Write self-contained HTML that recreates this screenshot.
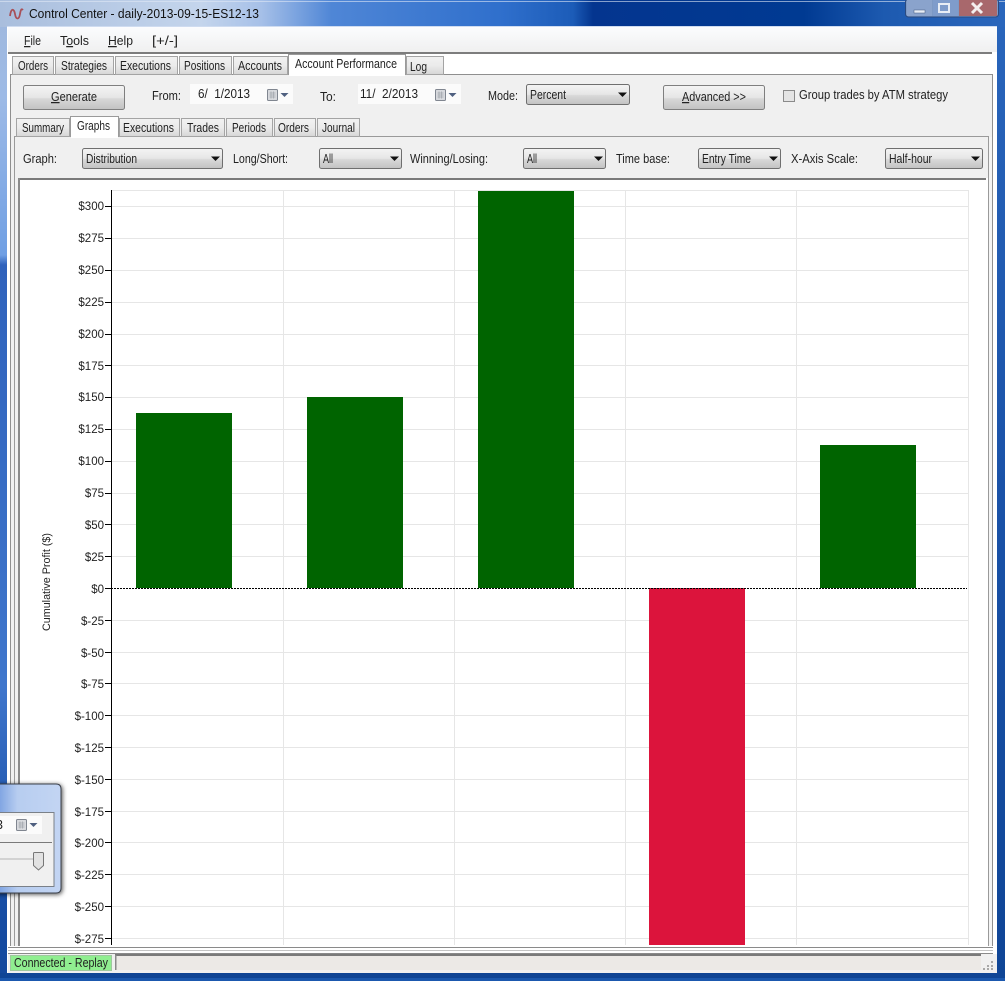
<!DOCTYPE html>
<html><head><meta charset="utf-8"><title>Control Center</title>
<style>
html,body{margin:0;padding:0;background:#fff;width:1005px;height:981px;overflow:hidden}
svg{display:block;position:absolute;left:0;top:0}
text{font-family:"Liberation Sans",sans-serif;font-size:12.5px;fill:#222}
.l{font-size:11.5px;fill:#222;text-anchor:end}
</style></head><body>
<svg width="1005" height="981" viewBox="0 0 1005 981" xmlns="http://www.w3.org/2000/svg">
<defs>
<linearGradient id="tb" x1="0" x2="1" y1="0" y2="0">
<stop offset="0" stop-color="#a9bedd"/><stop offset=".2" stop-color="#c4d5ec"/><stop offset=".26" stop-color="#a6c0e8"/><stop offset=".33" stop-color="#4f86d6"/><stop offset=".5" stop-color="#2f6fcc"/><stop offset=".57" stop-color="#1c5cb8"/><stop offset=".59" stop-color="#04358f"/><stop offset=".8" stop-color="#003a92"/><stop offset=".88" stop-color="#1d5ab0"/><stop offset="1" stop-color="#2a66bc"/>
</linearGradient>
<linearGradient id="lf" x1="0" x2="0" y1="0" y2="1">
<stop offset="0" stop-color="#a0b8dc"/><stop offset=".1" stop-color="#9dbae6"/><stop offset=".26" stop-color="#6f9fe4"/><stop offset=".27" stop-color="#2f62bc"/><stop offset=".7" stop-color="#3f76cc"/><stop offset=".85" stop-color="#1d54ac"/><stop offset="1" stop-color="#12479c"/>
</linearGradient>
<linearGradient id="rf" x1="0" x2="0" y1="0" y2="1">
<stop offset="0" stop-color="#2a66bc"/><stop offset=".5" stop-color="#1a52a8"/><stop offset="1" stop-color="#0f4596"/>
</linearGradient>
<linearGradient id="btn" x1="0" x2="0" y1="0" y2="1"><stop offset="0" stop-color="#f4f4f4"/><stop offset=".5" stop-color="#e6e6e6"/><stop offset=".55" stop-color="#d8d8d8"/><stop offset="1" stop-color="#c2c2c2"/></linearGradient>
<linearGradient id="tab" x1="0" x2="0" y1="0" y2="1"><stop offset="0" stop-color="#f2f2f2"/><stop offset=".5" stop-color="#ebebeb"/><stop offset="1" stop-color="#d6d6d6"/></linearGradient>
<linearGradient id="menu" x1="0" x2="0" y1="0" y2="1"><stop offset="0" stop-color="#fbfcfe"/><stop offset="1" stop-color="#f0f0f0"/></linearGradient>
<linearGradient id="pop" x1="0" x2="1" y1="0" y2="0"><stop offset="0" stop-color="#6f98de"/><stop offset=".35" stop-color="#b7cdf0"/><stop offset="1" stop-color="#c3d5f3"/></linearGradient>
<filter id="sh" x="-30%" y="-30%" width="160%" height="160%"><feDropShadow dx="1" dy="1" stdDeviation="2.500" flood-color="#000" flood-opacity=".7"/></filter>
<g id="cal"><rect x="0" y="0" width="10" height="11" rx="1" fill="#d8dade" stroke="#808690"/><path d="M2 3.500h6M2 5.500h6M2 7.500h6M3.500 2v7M6 2v7" stroke="#a4a8ae" stroke-width=".8"/><path d="M13 3.500h8l-4 4z" fill="#4f6080"/></g>
</defs>

<!-- window frame -->
<rect width="1005" height="981" fill="#1a52a8"/>
<rect x="0" y="0" width="8" height="981" fill="url(#lf)"/>
<rect x="997" y="0" width="8" height="981" fill="url(#rf)"/>
<rect x="0" y="0" width="1005" height="27" fill="url(#tb)"/>
<rect x="0" y="1" width="1005" height="1" fill="#dfe8f5" opacity=".6"/>
<rect x="0" y="973" width="1005" height="8" fill="#0f4596"/>
<rect x="0" y="978" width="1005" height="3" fill="#1b58ae"/>
<rect x="7" y="27" width="990" height="946" fill="#fff"/>
<rect x="7" y="26" width="990" height="1" fill="#cfdcf0"/>

<!-- title -->
<path d="M10 16c1-8 4-8 5-2s4 6 5 0 2-5 3-4" fill="none" stroke="#a85058" stroke-width="1.800"/>
<text x="29" y="18" textLength="230" lengthAdjust="spacingAndGlyphs" style="fill:#111">Control Center - daily-2013-09-15-ES12-13</text>

<!-- window buttons -->
<rect x="905.500" y="-1" width="93" height="18" rx="3" fill="#7d99c4" stroke="#2a4a80"/>
<rect x="907" y="0" width="25" height="16" fill="#8aa3cc"/>
<rect x="933" y="0" width="25" height="16" fill="#7f9ccb"/>
<rect x="959" y="0" width="38" height="16" fill="#a8686c"/>
<rect x="914" y="10" width="11" height="3" fill="#e8edf5" stroke="#40587e" stroke-width=".5"/>
<rect x="939" y="4" width="10" height="8" fill="none" stroke="#e8edf5" stroke-width="2"/>
<path d="M972 3l10 10M982 3l-10 10" stroke="#f4eeee" stroke-width="3"/>

<!-- menu -->
<rect x="8" y="27" width="989" height="25" fill="url(#menu)"/>
<rect x="8" y="52" width="984" height="2" fill="#7d7d7d"/>
<text x="24" y="45" textLength="17" lengthAdjust="spacingAndGlyphs"><tspan text-decoration="underline">F</tspan>ile</text>
<text x="60" y="45" textLength="29" lengthAdjust="spacingAndGlyphs">T<tspan text-decoration="underline">o</tspan>ols</text>
<text x="108" y="45" textLength="25" lengthAdjust="spacingAndGlyphs"><tspan text-decoration="underline">H</tspan>elp</text>
<text x="152" y="45" textLength="26" lengthAdjust="spacingAndGlyphs">[+/-]</text>

<!-- main panel -->
<rect x="8" y="54" width="989" height="893" fill="#fff"/>
<rect x="10.500" y="74.500" width="982" height="880" fill="#f0f0f0" stroke="#8f8f8f"/>
<!-- main tabs -->
<g fill="url(#tab)" stroke="#a4a4a4">
<rect x="12.500" y="56.500" width="41" height="18"/>
<rect x="55.500" y="56.500" width="58" height="18"/>
<rect x="115.500" y="56.500" width="62" height="18"/>
<rect x="179.500" y="56.500" width="52" height="18"/>
<rect x="233.500" y="56.500" width="54" height="18"/>
<rect x="406.500" y="56.500" width="37" height="18"/>
</g>
<path d="M288.500 75V54.500h117V75" fill="#fff" stroke="#9a9a9a"/>
<rect x="289" y="74" width="116" height="2" fill="#fff"/>
<text x="18" y="70" textLength="30" lengthAdjust="spacingAndGlyphs">Orders</text>
<text x="61" y="70" textLength="46" lengthAdjust="spacingAndGlyphs">Strategies</text>
<text x="120" y="70" textLength="51" lengthAdjust="spacingAndGlyphs">Executions</text>
<text x="184" y="70" textLength="41" lengthAdjust="spacingAndGlyphs">Positions</text>
<text x="238" y="70" textLength="44" lengthAdjust="spacingAndGlyphs">Accounts</text>
<text x="295" y="68" textLength="102" lengthAdjust="spacingAndGlyphs">Account Performance</text>
<text x="410" y="71" textLength="17" lengthAdjust="spacingAndGlyphs">Log</text>

<!-- toolbar -->
<rect x="23.500" y="85.500" width="101" height="24" rx="2" fill="url(#btn)" stroke="#7f7f7f"/>
<text x="51" y="101" textLength="46" lengthAdjust="spacingAndGlyphs"><tspan text-decoration="underline">G</tspan>enerate</text>
<text x="152" y="100" textLength="29" lengthAdjust="spacingAndGlyphs">From:</text>
<rect x="190" y="84" width="103" height="20" fill="#fbfbfb"/>
<text x="198" y="98" textLength="52" lengthAdjust="spacingAndGlyphs" xml:space="preserve">6/  1/2013</text>
<use href="#cal" x="267.500" y="89.500"/>
<text x="320" y="101" textLength="16" lengthAdjust="spacingAndGlyphs">To:</text>
<rect x="358" y="84" width="103" height="20" fill="#fbfbfb"/>
<text x="360" y="98" textLength="58" lengthAdjust="spacingAndGlyphs" xml:space="preserve">11/  2/2013</text>
<use href="#cal" x="435.500" y="89.500"/>
<text x="488" y="100" textLength="30" lengthAdjust="spacingAndGlyphs">Mode:</text>
<rect x="526.500" y="84.500" width="103" height="20" rx="2" fill="url(#btn)" stroke="#6f6f6f"/><path d="M618 92.500h9l-4.500 4.500z" fill="#111"/>
<text x="530" y="99" textLength="36" lengthAdjust="spacingAndGlyphs">Percent</text>
<rect x="663.500" y="85.500" width="101" height="24" rx="2" fill="url(#btn)" stroke="#7f7f7f"/>
<text x="682" y="101" textLength="64" lengthAdjust="spacingAndGlyphs"><tspan text-decoration="underline">A</tspan>dvanced &gt;&gt;</text>
<rect x="783.500" y="90.500" width="11" height="11" fill="#e4e4e4" stroke="#8a8a8a"/>
<text x="799" y="99" textLength="149" lengthAdjust="spacingAndGlyphs">Group trades by ATM strategy</text>

<!-- sub panel -->
<rect x="14.500" y="136.500" width="974" height="812" fill="#f0f0f0" stroke="#9a9a9a"/>
<g fill="url(#tab)" stroke="#a4a4a4">
<rect x="16.500" y="118.500" width="53" height="18"/>
<rect x="119.500" y="118.500" width="60" height="18"/>
<rect x="181.500" y="118.500" width="43" height="18"/>
<rect x="226.500" y="118.500" width="46" height="18"/>
<rect x="274.500" y="118.500" width="41" height="18"/>
<rect x="317.500" y="118.500" width="42" height="18"/>
</g>
<path d="M70.500 137V116.500h48V137" fill="#fff" stroke="#9a9a9a"/>
<rect x="71" y="136" width="47" height="2" fill="#fff"/>
<text x="22" y="132" textLength="42" lengthAdjust="spacingAndGlyphs">Summary</text>
<text x="77" y="130" textLength="33" lengthAdjust="spacingAndGlyphs">Graphs</text>
<text x="123" y="132" textLength="51" lengthAdjust="spacingAndGlyphs">Executions</text>
<text x="187" y="132" textLength="32" lengthAdjust="spacingAndGlyphs">Trades</text>
<text x="232" y="132" textLength="34" lengthAdjust="spacingAndGlyphs">Periods</text>
<text x="278" y="132" textLength="31" lengthAdjust="spacingAndGlyphs">Orders</text>
<text x="322" y="132" textLength="33" lengthAdjust="spacingAndGlyphs">Journal</text>

<!-- graph row -->
<text x="23" y="163" textLength="34" lengthAdjust="spacingAndGlyphs">Graph:</text>
<rect x="82.500" y="148.500" width="140" height="20" rx="2" fill="url(#btn)" stroke="#6f6f6f"/><path d="M211 156.500h9l-4.500 4.500z" fill="#111"/>
<text x="86" y="163" textLength="51" lengthAdjust="spacingAndGlyphs">Distribution</text>
<text x="233" y="163" textLength="55" lengthAdjust="spacingAndGlyphs">Long/Short:</text>
<rect x="319.500" y="148.500" width="82" height="20" rx="2" fill="url(#btn)" stroke="#6f6f6f"/><path d="M390 156.500h9l-4.500 4.500z" fill="#111"/>
<text x="323" y="163" textLength="10" lengthAdjust="spacingAndGlyphs">All</text>
<text x="410" y="163" textLength="78" lengthAdjust="spacingAndGlyphs">Winning/Losing:</text>
<rect x="523.500" y="148.500" width="82" height="20" rx="2" fill="url(#btn)" stroke="#6f6f6f"/><path d="M594 156.500h9l-4.500 4.500z" fill="#111"/>
<text x="527" y="163" textLength="10" lengthAdjust="spacingAndGlyphs">All</text>
<text x="616" y="163" textLength="54" lengthAdjust="spacingAndGlyphs">Time base:</text>
<rect x="698.500" y="148.500" width="82" height="20" rx="2" fill="url(#btn)" stroke="#6f6f6f"/><path d="M769 156.500h9l-4.500 4.500z" fill="#111"/>
<text x="702" y="163" textLength="49" lengthAdjust="spacingAndGlyphs">Entry Time</text>
<text x="791" y="163" textLength="67" lengthAdjust="spacingAndGlyphs">X-Axis Scale:</text>
<rect x="885.500" y="148.500" width="97" height="20" rx="2" fill="url(#btn)" stroke="#6f6f6f"/><path d="M971 156.500h9l-4.500 4.500z" fill="#111"/>
<text x="889" y="163" textLength="43" lengthAdjust="spacingAndGlyphs">Half-hour</text>

<!-- chart area -->
<rect x="18" y="178" width="971" height="768" fill="#fff"/>
<rect x="18" y="178" width="968" height="2" fill="#7a7a7a"/>
<rect x="18" y="178" width="2" height="768" fill="#8a8a8a"/>
<rect x="8" y="946" width="986" height="7" fill="#fff"/>
<rect x="8" y="947" width="986" height="1" fill="#8a8a8a"/>
<rect x="8" y="950" width="986" height="1" fill="#c4c4c4"/>
<rect x="10" y="75" width="1" height="871" fill="#8f8f8f"/>
<rect x="14" y="137" width="1" height="809" fill="#9a9a9a"/>
<rect x="988" y="136" width="1" height="810" fill="#9a9a9a"/>
<rect x="992" y="75" width="1" height="871" fill="#8f8f8f"/>
<rect x="989" y="137" width="3" height="809" fill="#f4f4f4"/>
<rect x="993" y="54" width="4" height="899" fill="#fff"/>

<!-- grid -->
<g stroke="#e6e6e6" stroke-width="1" shape-rendering="crispEdges">
<path d="M111 190.500H969M111 206.500H969M111 238.500H969M111 270.500H969M111 302.500H969M111 334.500H969M111 365.500H969M111 397.500H969M111 429.500H969M111 461.500H969M111 493.500H969M111 524.500H969M111 556.500H969M111 620.500H969M111 652.500H969M111 683.500H969M111 715.500H969M111 747.500H969M111 779.500H969M111 811.500H969M111 842.500H969M111 874.500H969M111 906.500H969M111 938.500H969"/>
<path d="M283.500 190V945M454.500 190V945M625.500 190V945M796.500 190V945M968.500 190V945"/>
</g>
<!-- bars -->
<rect x="136" y="413" width="96" height="175" fill="#006400"/>
<rect x="307" y="397" width="96" height="191" fill="#006400"/>
<rect x="478" y="191" width="96" height="397" fill="#006400"/>
<rect x="649" y="588" width="96" height="357" fill="#dc143c"/>
<rect x="820" y="445" width="96" height="143" fill="#006400"/>
<path d="M111 588.500H967" stroke="#000" stroke-dasharray="2 1" shape-rendering="crispEdges"/>
<!-- axis -->
<path d="M111.500 190V945" stroke="#000" shape-rendering="crispEdges"/>
<path d="M105 206.500h6M105 238.500h6M105 270.500h6M105 302.500h6M105 334.500h6M105 365.500h6M105 397.500h6M105 429.500h6M105 461.500h6M105 493.500h6M105 524.500h6M105 556.500h6M105 588.500h6M105 620.500h6M105 652.500h6M105 683.500h6M105 715.500h6M105 747.500h6M105 779.500h6M105 811.500h6M105 842.500h6M105 874.500h6M105 906.500h6M105 938.500h6" stroke="#000" shape-rendering="crispEdges"/>
<g>
<text class="l" x="104" y="210">$300</text>
<text class="l" x="104" y="242">$275</text>
<text class="l" x="104" y="274">$250</text>
<text class="l" x="104" y="306">$225</text>
<text class="l" x="104" y="338">$200</text>
<text class="l" x="104" y="370">$175</text>
<text class="l" x="104" y="401">$150</text>
<text class="l" x="104" y="433">$125</text>
<text class="l" x="104" y="465">$100</text>
<text class="l" x="104" y="497">$75</text>
<text class="l" x="104" y="529">$50</text>
<text class="l" x="104" y="561">$25</text>
<text class="l" x="104" y="593">$0</text>
<text class="l" x="104" y="625">$-25</text>
<text class="l" x="104" y="657">$-50</text>
<text class="l" x="104" y="688">$-75</text>
<text class="l" x="104" y="720">$-100</text>
<text class="l" x="104" y="752">$-125</text>
<text class="l" x="104" y="784">$-150</text>
<text class="l" x="104" y="816">$-175</text>
<text class="l" x="104" y="847">$-200</text>
<text class="l" x="104" y="879">$-225</text>
<text class="l" x="104" y="911">$-250</text>
<text class="l" x="104" y="943">$-275</text>
</g>
<text transform="translate(50,631) rotate(-90)" textLength="98" lengthAdjust="spacingAndGlyphs" style="font-size:11px">Cumulative Profit ($)</text>

<!-- status bar -->
<rect x="8" y="953" width="984" height="1" fill="#8a8a8a"/>
<rect x="8" y="954" width="989" height="19" fill="#f0f0f0"/>
<rect x="10.500" y="955.500" width="101" height="15" fill="#90ee90" stroke="#9fc89f"/>
<text x="14" y="967" textLength="94" lengthAdjust="spacingAndGlyphs">Connected - Replay</text>
<rect x="115" y="955" width="866" height="15" fill="#ece9e6"/>
<rect x="115" y="954" width="866" height="2" fill="#7a7a7a"/>
<rect x="115" y="955" width="1.500" height="15" fill="#8a8a8a"/>
<g fill="#a8a8a8"><rect x="991" y="961" width="2" height="2"/><rect x="987" y="965" width="2" height="2"/><rect x="991" y="965" width="2" height="2"/><rect x="983" y="968" width="2" height="2"/><rect x="987" y="968" width="2" height="2"/><rect x="991" y="968" width="2" height="2"/></g>

<!-- popup -->
<g filter="url(#sh)">
<path d="M-6 784H56q5 0 5 5V888q0 5-5 5H-6z" fill="url(#pop)" stroke="#3a3f4a"/>
</g>
<rect x="-2" y="812.500" width="56" height="74" fill="#f0f0f0" stroke="#7a8088"/>
<rect x="-2" y="816" width="44" height="18" fill="#fbfbfb"/>
<text x="-4" y="829">3</text>
<use href="#cal" x="16.500" y="819.500"/>
<rect x="-2" y="842" width="54" height="1" fill="#7a7a7a"/>
<rect x="-2" y="858" width="36" height="2" fill="#d2d2d2"/>
<path d="M33.500 853.500q0-1 1-1h8q1 0 1 1v12l-5 4.500-5-4.500z" fill="#e2e2e2" stroke="#777"/>
</svg>
</body></html>
